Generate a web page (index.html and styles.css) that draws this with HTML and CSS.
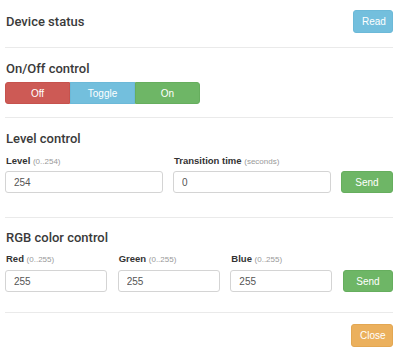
FILE: index.html
```html
<!DOCTYPE html>
<html>
<head>
    <link rel="stylesheet" href="styles.css">
</head>
<body>
    <div class="modal-body">
        <div class="section section-status">
            <div class="section-title">Device status</div>
            <button class="btn btn-info" id="read">Read</button>
        </div>

        <div class="section section-onoff">
            <div class="section-title">On/Off control</div>
            <div class="btn-group">
                <button class="btn btn-danger" id="off">Off</button>
                <button class="btn btn-info" id="toggle">Toggle</button>
                <button class="btn btn-success" id="on">On</button>
            </div>
        </div>

        <div class="section section-level">
            <div class="section-title">Level control</div>
            <div class="form-row level-row">
                <div class="form-group">
                    <label for="level">Level <span class="hint">(0..254)</span></label>
                    <input type="text" id="level" value="254">
                </div>
                <div class="form-group">
                    <label for="transition">Transition time <span class="hint">(seconds)</span></label>
                    <input type="text" id="transition" value="0">
                </div>
                <button class="btn btn-success" id="send-level">Send</button>
            </div>
        </div>

        <div class="section section-rgb">
            <div class="section-title">RGB color control</div>
            <div class="form-row rgb-row">
                <div class="form-group">
                    <label for="red">Red <span class="hint">(0..255)</span></label>
                    <input type="text" id="red" value="255">
                </div>
                <div class="form-group">
                    <label for="green">Green <span class="hint">(0..255)</span></label>
                    <input type="text" id="green" value="255">
                </div>
                <div class="form-group">
                    <label for="blue">Blue <span class="hint">(0..255)</span></label>
                    <input type="text" id="blue" value="255">
                </div>
                <button class="btn btn-success" id="send-rgb">Send</button>
            </div>
        </div>

        <div class="section modal-footer">
            <button class="btn btn-warning" id="close">Close</button>
        </div>
    </div>
</body>
</html>
```

FILE: styles.css
```css
body {
    font-family: 'Liberation Sans', Arial, sans-serif;
    margin: 0;
    padding: 0;
    background-color: #FFF;
    color: #333;
}
.modal-body {
    padding: 0 7px 0 5px;
}
.section {
    border-top: 1px solid #EAEAEA;
}
.section:first-child {
    border-top: none;
}
.section-title {
    font-family: Roboto, 'Liberation Sans', sans-serif;
    font-size: 13px;
    font-weight: 500;
    line-height: 16px;
    color: #3A3A3A;
    padding-left: 1px;
}
.section-status {
    display: flex;
    justify-content: space-between;
    align-items: center;
    padding: 10px 0 14px;
}
.section-onoff {
    padding: 13px 0 13px;
}
.section-level {
    padding: 13px 0 24px;
}
.section-rgb {
    padding: 12px 0 20px;
}
.modal-footer {
    display: flex;
    justify-content: flex-end;
    padding: 11px 0 6px;
}
.btn {
    font-family: 'Liberation Sans', Arial, sans-serif;
    font-size: 10px;
    color: #FFF;
    border: 1px solid transparent;
    border-radius: 3px;
    height: 23px;
    padding: 0 8px;
    cursor: pointer;
}
.btn-info {
    background-color: #73BFDD;
    border-color: #6CB9D8;
}
.btn-danger {
    background-color: #CD5A55;
    border-color: #C6524D;
}
.btn-success {
    background-color: #6EB666;
    border-color: #66AE5E;
}
.btn-warning {
    background-color: #EBB05D;
    border-color: #E3A752;
}
.btn-group {
    display: flex;
    margin-top: 5px;
    width: 195px;
}
.btn-group .btn {
    flex: 1;
    border-radius: 0;
    height: 22px;
}
.btn-group .btn:first-child {
    border-top-left-radius: 3px;
    border-bottom-left-radius: 3px;
}
.btn-group .btn:last-child {
    border-top-right-radius: 3px;
    border-bottom-right-radius: 3px;
}
.form-row {
    display: grid;
    align-items: end;
    column-gap: 10px;
}
.level-row {
    grid-template-columns: 1fr 1fr 52px;
    margin-top: 8px;
}
.rgb-row {
    grid-template-columns: 1fr 1fr 1fr 50px;
    column-gap: 10.5px;
    margin-top: 7px;
}
.form-group label {
    display: block;
    font-size: 9.5px;
    font-weight: bold;
    line-height: 12px;
    margin-bottom: 3px;
    padding-left: 1px;
}
.rgb-row .form-group label {
    margin-bottom: 4px;
}
.hint {
    font-weight: normal;
    font-size: 8px;
    color: #999;
}
input[type="text"] {
    display: block;
    width: 100%;
    height: 22px;
    box-sizing: border-box;
    padding: 0 8px;
    font-family: 'Liberation Sans', Arial, sans-serif;
    font-size: 10px;
    color: #555;
    border: 1px solid #D4D4D4;
    border-radius: 3px;
    background-color: #FFF;
}
.form-row .btn {
    height: 22px;
    width: 100%;
}
#read {
    width: 40px;
}
#close {
    width: 42px;
}
```
